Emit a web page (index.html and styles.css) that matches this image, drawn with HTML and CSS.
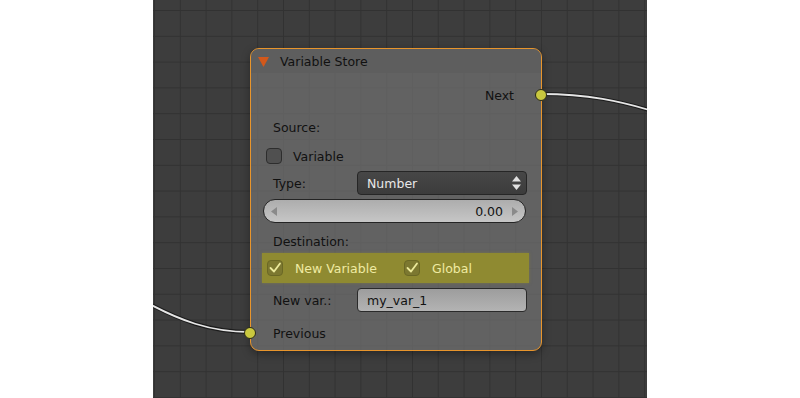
FILE: index.html
```html
<!DOCTYPE html>
<html lang="en">

<head>
    <meta charset="UTF-8">
    <meta name="viewport" content="width=device-width, initial-scale=1.0">
    <title>Node Editor - Variable Store</title>
    <link rel="stylesheet" href="styles.css">
</head>

<body>
    <div class="canvas">
        <svg class="wires" viewBox="153 0 494 398" width="494" height="398">
            <path class="wire-shadow" d="M541 94 C 585 94, 620 100, 665 115" />
            <path class="wire" d="M541 94 C 585 94, 620 100, 665 115" />
            <path class="wire-shadow" d="M135 296 C 180 322, 212 332, 250 332" />
            <path class="wire" d="M135 296 C 180 322, 212 332, 250 332" />
        </svg>

        <div class="node">
            <div class="node-header">
                <svg class="collapse" width="11" height="11" viewBox="0 0 11 11">
                    <polygon points="0,1 11,1 5.5,11" />
                </svg>
                <span>Variable Store</span>
            </div>
            <div class="node-body">
                <div class="row row-output">
                    <span>Next</span>
                    <span class="socket socket-out"></span>
                </div>
                <div class="row row-source">
                    <span class="label">Source:</span>
                </div>
                <div class="row row-variable">
                    <span class="checkbox"></span>
                    <span>Variable</span>
                </div>
                <div class="row row-type">
                    <span class="field-label">Type:</span>
                    <div class="dropdown">
                        <span>Number</span>
                        <svg width="9" height="14" viewBox="0 0 9 14">
                            <polygon points="4.5,0 9,5.5 0,5.5" />
                            <polygon points="0,8.5 9,8.5 4.5,14" />
                        </svg>
                    </div>
                </div>
                <div class="row row-slider">
                    <div class="slider">
                        <svg width="6" height="9" viewBox="0 0 6 9">
                            <polygon points="6,0 6,9 0,4.5" />
                        </svg>
                        <span class="slider-value">0.00</span>
                        <svg width="6" height="9" viewBox="0 0 6 9">
                            <polygon points="0,0 6,4.5 0,9" />
                        </svg>
                    </div>
                </div>
                <div class="row row-destination">
                    <span class="label">Destination:</span>
                </div>
                <div class="row row-highlight">
                    <div class="option option-new">
                        <span class="checkbox checked">
                            <svg width="14" height="14" viewBox="0 0 14 14">
                                <polyline points="2.5,7 6,10.5 12,2.5" />
                            </svg>
                        </span>
                        <span>New Variable</span>
                    </div>
                    <div class="option">
                        <span class="checkbox checked">
                            <svg width="14" height="14" viewBox="0 0 14 14">
                                <polyline points="2.5,7 6,10.5 12,2.5" />
                            </svg>
                        </span>
                        <span>Global</span>
                    </div>
                </div>
                <div class="row row-newvar">
                    <span class="field-label">New var.:</span>
                    <div class="textfield">my_var_1</div>
                </div>
                <div class="row row-input">
                    <span class="socket socket-in"></span>
                    <span class="label">Previous</span>
                </div>
            </div>
        </div>
    </div>
</body>

</html>
```

FILE: styles.css
```css
* {
    padding: 0;
    margin: 0;
    box-sizing: border-box;
}

body {
    background-color: white;
    font-family: "DejaVu Sans", "Liberation Sans", sans-serif;
    font-size: 12.5px;
    color: #111;
    display: flex;
}

.canvas {
    position: relative;
    width: 494px;
    height: 398px;
    margin-left: 153px;
    overflow: hidden;
    background-color: #3d3d3d;
    background-image:
        linear-gradient(to right, #323232 1px, transparent 1px),
        linear-gradient(to bottom, #323232 1px, transparent 1px);
    background-size: 25.8px 25.8px;
    background-position: 1px 10px;
}

.wires {
    position: absolute;
    left: 0;
    top: 0;
}

.wire-shadow {
    fill: none;
    stroke: #1c1c1c;
    stroke-width: 4;
}

.wire {
    fill: none;
    stroke: #e6e6e6;
    stroke-width: 1.8;
}

/* node on the canvas */
.node {
    position: absolute;
    left: 97px;
    top: 48px;
    width: 292px;
    height: 303px;
    border: 1px solid #e8952c;
    border-radius: 9px;
    background-color: rgba(112, 112, 112, 0.72);
    box-shadow: rgba(0, 0, 0, 0.35) 0px 3px 8px;
}

.node-header {
    display: flex;
    align-items: center;
    height: 24px;
    padding-left: 7px;
    background-color: rgba(94, 94, 94, 0.75);
    border-top-left-radius: 8px;
    border-top-right-radius: 8px;
}

.collapse {
    margin-right: 11px;
}

.collapse polygon {
    fill: #d2581b;
}

.node-body {
    display: flex;
    flex-direction: column;
}

.row {
    position: relative;
    display: flex;
    align-items: center;
    height: 24px;
    padding-left: 22px;
    padding-right: 14px;
}

.row-output {
    justify-content: flex-end;
    margin-top: 10px;
    padding-right: 27px;
}

.row-source {
    margin-top: 8px;
}

.row-variable {
    margin-top: 5px;
    padding-left: 15px;
}

.row-type {
    margin-top: 3px;
}

.row-slider {
    margin-top: 4px;
    padding-left: 12px;
    padding-right: 15px;
}

.row-destination {
    margin-top: 6px;
}

.row-highlight {
    height: 30px;
    margin: 0 12px 0 11px;
    padding: 0 0 0 5px;
    background-color: #8f8a31;
    color: #efeba3;
    box-shadow: rgba(143, 138, 49, 0.5) 0px 0px 3px;
}

.row-newvar {
    margin-top: 5px;
}

.row-input {
    margin-top: 9px;
}

.field-label {
    width: 84px;
    flex-shrink: 0;
}

.checkbox {
    display: inline-flex;
    align-items: center;
    justify-content: center;
    width: 16px;
    height: 16px;
    margin-right: 11px;
    border: 1px solid #2d2d2d;
    border-radius: 4px;
    background-color: #505050;
}

.checkbox.checked {
    border-color: #6b6825;
    background-color: #7c7830;
    margin-right: 12px;
}

.checkbox polyline {
    fill: none;
    stroke: #ecea9c;
    stroke-width: 1.8;
    stroke-linecap: round;
    stroke-linejoin: round;
}

.option {
    display: flex;
    align-items: center;
}

.option-new {
    width: 137px;
}

.dropdown {
    flex: 1;
    display: flex;
    align-items: center;
    justify-content: space-between;
    height: 24px;
    padding: 0 5px 0 9px;
    border: 1px solid #262626;
    border-radius: 4px;
    background: linear-gradient(#474747, #3c3c3c);
    color: #e8e8e8;
}

.dropdown polygon {
    fill: #e0e0e0;
}

.slider {
    flex: 1;
    display: flex;
    align-items: center;
    height: 24px;
    padding: 0 7px 0 7px;
    border: 1px solid #242424;
    border-radius: 12px;
    background: linear-gradient(#adadad, #c6c6c6);
}

.slider polygon {
    fill: #8a8a8a;
}

.slider-value {
    flex: 1;
    text-align: right;
    margin-right: 9px;
}

.textfield {
    flex: 1;
    display: flex;
    align-items: center;
    height: 24px;
    padding-left: 9px;
    border: 1px solid #2a2a2a;
    border-radius: 4px;
    background: linear-gradient(#9d9d9d, #b3b3b3);
}

/* sockets sit on the node border */
.socket {
    position: absolute;
    top: 6px;
    width: 12px;
    height: 12px;
    border-radius: 50%;
    border: 1px solid #2a2a18;
    background-color: #c9c83f;
}

.socket-out {
    right: -6px;
}

.socket-in {
    left: -7px;
}
```
